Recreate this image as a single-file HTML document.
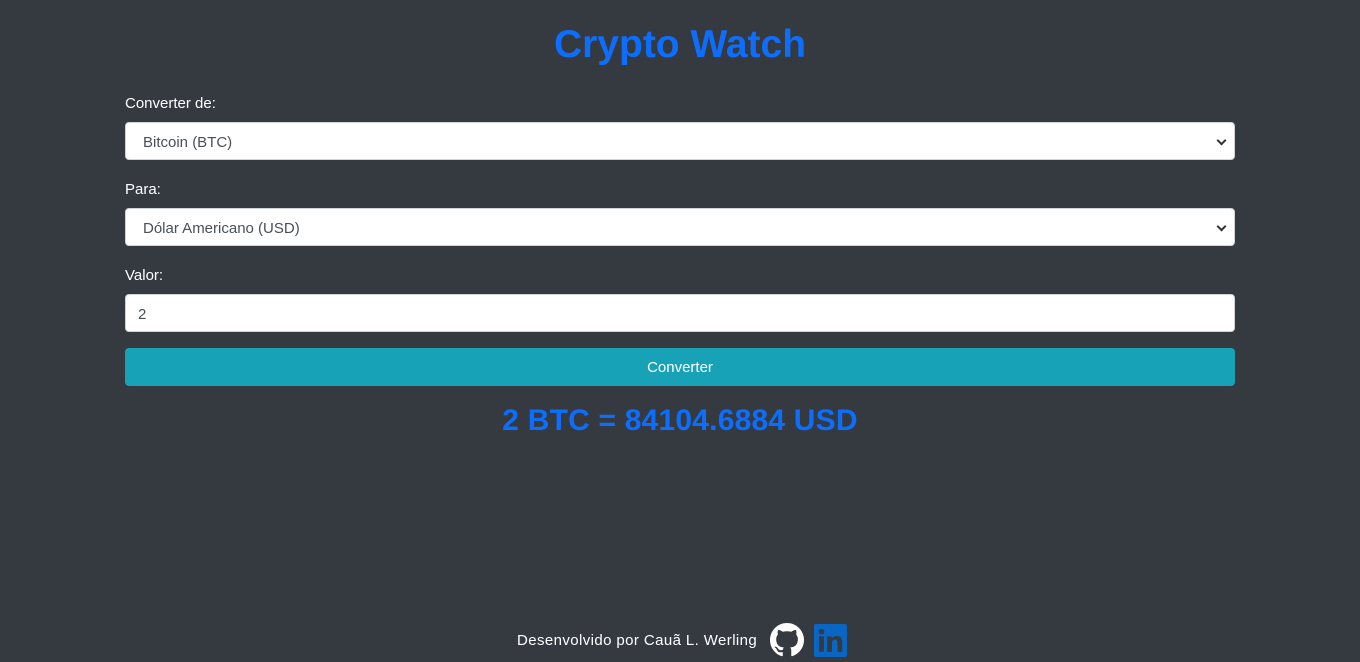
<!DOCTYPE html>
<html><head><meta charset="utf-8"><style>
body{margin:0;width:1360px;height:662px;background:#343a40;font-family:"Liberation Sans",sans-serif;color:#fff;position:relative;overflow:hidden}
h1{margin:0;position:absolute;top:22px;left:0;width:1360px;text-align:center;color:#0d6efd;font-size:39px;font-weight:600;line-height:46px}
.lbl{position:absolute;left:125px;font-size:15px}
.box{position:absolute;left:125px;width:1110px;height:38px;box-sizing:border-box;background:#fff;border:1px solid #ced4da;border-radius:4px;color:#495057;font-size:15px;line-height:40px;padding-left:17px}
.sel::after{content:"";position:absolute;right:9px;top:14px;width:5px;height:5px;border-right:2px solid #333;border-bottom:2px solid #333;transform:rotate(45deg)}
.btn{position:absolute;left:125px;top:348px;width:1110px;height:38px;background:#17a2b8;border-radius:4px;text-align:center;line-height:40px;font-size:15px}
.res{position:absolute;top:404px;width:1360px;text-align:center;color:#0d6efd;font-size:30px;font-weight:600;letter-spacing:0.2px}
.foot{position:absolute;top:623px;left:517px;font-size:15px;display:flex;align-items:center;height:34px}
</style></head><body>
<h1>Crypto Watch</h1>
<div class="lbl" style="top:95px">Converter de:</div>
<div class="box sel" style="top:122px">Bitcoin (BTC)</div>
<div class="lbl" style="top:181px">Para:</div>
<div class="box sel" style="top:208px">Dólar Americano (USD)</div>
<div class="lbl" style="top:267px">Valor:</div>
<div class="box" style="top:294px;padding-left:12px">2</div>
<div class="btn">Converter</div>
<div class="res">2 BTC = 84104.6884 USD</div>
<div class="foot"><span style="letter-spacing:0.4px">Desenvolvido por Cauã L. Werling</span>
<svg style="margin-left:13px" width="34" height="34" viewBox="0 0 16 16"><path fill="#fff" d="M8 0C3.58 0 0 3.58 0 8c0 3.54 2.29 6.53 5.47 7.590.4.07.55-.17.55-.38 0-.19-.01-.82-.01-1.49-2.010.37-2.53-.49-2.690-.94-.09-.23-.48-.94-.82-1.13-.28-.15-.68-.52-.01-.53.63-.01 1.080.58 1.230.82.72 1.21 1.870.87 2.330.66.07-.52.28-.87.51-1.07-1.78-.2-3.64-.89-3.640-3.95 0-.87.31-1.59.82-2.15-.08-.2-.36-1.020.08-2.12 0 0 .67-.21 2.200.82.64-.18 1.320-.27 2-.27.68 0 1.360.09 2 .27 1.530-1.04 2.200-.82 2.200-.82.44 1.100.16 1.920.08 2.12.51.56.82 1.270.82 2.15 0 3.070-1.87 3.750-3.650 3.95.29.25.54.73.54 1.48 0 1.070-.01 1.930-.01 2.2 0 .21.15.46.55.38A8.013 8.013 0 0016 8c0-4.42-3.58-8-8-8z"/></svg>
<svg style="margin-left:10px" width="33" height="33" viewBox="0 0 16 16"><rect width="16" height="16" rx="1" fill="#0a66c2"/><rect x="2.5" y="6" width="2.3" height="7.5" fill="#343a40"/><circle cx="3.65" cy="3.7" r="1.35" fill="#343a40"/><path fill="#343a40" d="M6.4 6h2.2v1.1c.4-.7 1.2-1.3 2.5-1.3 2.2 0 2.6 1.4 2.6 3.3v4.4h-2.3V9.6c0-.9 0-2-1.2-2s-1.5.9-1.5 1.9v4H6.4z"/></svg>
</div>
</body></html>
